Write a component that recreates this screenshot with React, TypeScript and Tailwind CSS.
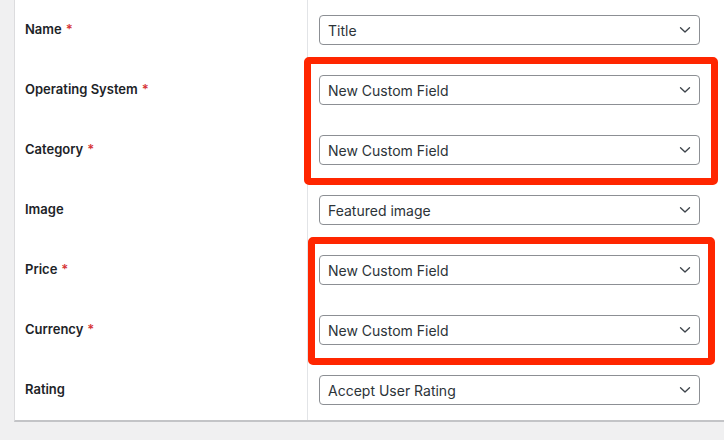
import React from "react";

const rows = [
  { label: "Name", required: true, value: "Title" },
  { label: "Operating System", required: true, value: "New Custom Field" },
  { label: "Category", required: true, value: "New Custom Field" },
  { label: "Image", required: false, value: "Featured image" },
  { label: "Price", required: true, value: "New Custom Field" },
  { label: "Currency", required: true, value: "New Custom Field" },
  { label: "Rating", required: false, value: "Accept User Rating" },
];

function Chevron() {
  return (
    <svg width="12" height="8" viewBox="0 0 12 8" fill="none" className="shrink-0">
      <path d="M1.5 1.75 L6 6 L10.5 1.75" stroke="#3c434a" strokeWidth="1.3" strokeLinecap="round" strokeLinejoin="round" />
    </svg>
  );
}

export default function App() {
  return (
    <div className="w-[724px] h-[440px] bg-[#f0f0f1] overflow-hidden font-['Inter',sans-serif] text-[#1d2327]">
      <div className="relative ml-[14px] h-[422px] bg-white border-l border-[#dcdcde] border-b-2 border-b-[#c3c4c7]">
        {rows.map((row) => (
          <div key={row.label} className="flex h-[60px]">
            <div className="w-[293px] border-r border-[#e2e4e7] flex items-center pl-[10px] text-[13px] font-semibold text-[#1d2327]">
              {row.label}
              {row.required && <span className="ml-[4px] text-[#d63638]">*</span>}
            </div>
            <div className="flex-1 flex items-center pl-[11px]">
              <div className="w-[381px] h-[30px] border border-[#8c8f94] rounded-[4px] flex items-center justify-between pl-[8px] pr-[8px] text-[14px] text-[#2c3338]">
                <span>{row.value}</span>
                <Chevron />
              </div>
            </div>
          </div>
        ))}

        <div className="absolute left-[289px] top-[57px] w-[414px] h-[128px] border-[7px] border-[#ff2600] rounded-[5px]" />
        <div className="absolute left-[293px] top-[237px] w-[407px] h-[128px] border-[7px] border-[#ff2600] rounded-[5px]" />
      </div>
    </div>
  );
}
